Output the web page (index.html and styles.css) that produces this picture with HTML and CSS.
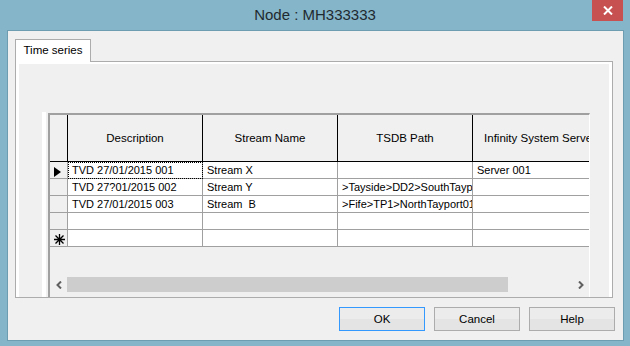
FILE: index.html
```html
<!DOCTYPE html>
<html lang="en">
<head>
  <meta charset="UTF-8" />
  <title>Node : MH333333</title>
  <link rel="stylesheet" href="styles.css">
</head>
<body>
  <div class="window">
    <div class="titlebar">
      <span></span>
      <span class="title">Node : MH333333</span>
      <span class="close-wrap">
        <button class="close" type="button">
          <svg width="10" height="9" viewBox="0 0 10 9">
            <path d="M1 0.5 L9 8.5 M9 0.5 L1 8.5" stroke="#fff" stroke-width="2" fill="none"/>
          </svg>
        </button>
      </span>
    </div>

    <div class="client">
      <div class="tabs">
        <div class="tab">Time series</div>
        <div class="tab-fill"></div>
      </div>

      <div class="panel">
        <div class="page">
          <div class="grid-host">
            <div class="grid">
              <table class="data">
                <thead>
                  <tr>
                    <th class="rowhead"></th>
                    <th>Description</th>
                    <th>Stream Name</th>
                    <th>TSDB Path</th>
                    <th>Infinity System Server</th>
                  </tr>
                </thead>
                <tbody>
                  <tr>
                    <td class="rowhead">
                      <svg width="7" height="10" viewBox="0 0 7 10"><polygon points="0,0 7,5 0,10" fill="#000"/></svg>
                    </td>
                    <td class="focus">TVD 27/01/2015 001</td>
                    <td>Stream X</td>
                    <td></td>
                    <td>Server 001</td>
                  </tr>
                  <tr>
                    <td class="rowhead"></td>
                    <td>TVD 27?01/2015 002</td>
                    <td>Stream Y</td>
                    <td>&gt;Tayside&gt;DD2&gt;SouthTayport</td>
                    <td></td>
                  </tr>
                  <tr>
                    <td class="rowhead"></td>
                    <td>TVD 27/01/2015 003</td>
                    <td>Stream&nbsp; B</td>
                    <td>&gt;Fife&gt;TP1&gt;NorthTayport01</td>
                    <td></td>
                  </tr>
                  <tr>
                    <td class="rowhead"></td>
                    <td></td><td></td><td></td><td></td>
                  </tr>
                  <tr>
                    <td class="rowhead">
                      <svg width="11" height="11" viewBox="0 0 11 11">
                        <path d="M5.5 0 V11 M0 5.5 H11 M1.5 1.5 L9.5 9.5 M9.5 1.5 L1.5 9.5" stroke="#000" stroke-width="1.3" fill="none"/>
                      </svg>
                    </td>
                    <td></td><td></td><td></td><td></td>
                  </tr>
                </tbody>
              </table>
              <div class="grid-space"></div>
              <div class="hscroll">
                <div class="arrow">
                  <svg width="6" height="8" viewBox="0 0 6 8"><polyline points="5,0.5 1.5,4 5,7.5" stroke="#606060" stroke-width="2" fill="none"/></svg>
                </div>
                <div class="track"><div class="thumb"></div></div>
                <div class="arrow">
                  <svg width="6" height="8" viewBox="0 0 6 8"><polyline points="1,0.5 4.5,4 1,7.5" stroke="#606060" stroke-width="2" fill="none"/></svg>
                </div>
              </div>
            </div>
          </div>
        </div>
      </div>

      <div class="buttons">
        <button class="btn default" type="button">OK</button>
        <button class="btn" type="button">Cancel</button>
        <button class="btn" type="button">Help</button>
      </div>
    </div>
  </div>
</body>
</html>
```

FILE: styles.css
```css
* {
  box-sizing: border-box;
}

body {
  margin: 0;
  font-family: "Liberation Sans", Arial, sans-serif;
  background-color: #85b5c8;
}

.window {
  width: 630px;
  height: 346px;
  background-color: #85b5c8;
  overflow: hidden;
}

.titlebar {
  display: grid;
  grid-template-columns: 1fr auto 1fr;
  height: 30px;
}

.title {
  font-size: 15px;
  line-height: 30px;
  color: #1f2a30;
}

.close-wrap {
  display: flex;
  justify-content: flex-end;
  align-items: flex-start;
  padding-right: 7px;
}

.close {
  width: 31px;
  height: 21px;
  border: none;
  padding: 0;
  background-color: #c75050;
  display: flex;
  align-items: center;
  justify-content: center;
}

.client {
  margin: 0 7px;
  width: 617px;
  height: 311px;
  border: 1px solid #6c9db1;
  background-color: #f0f0f0;
  padding: 8px 8px 0 7px;
}

.tabs {
  display: flex;
  width: 598px;
  height: 23px;
}

.tab {
  width: 76px;
  border: 1px solid #acacac;
  border-bottom: none;
  background-color: #fff;
  font-size: 11.5px;
  line-height: 21px;
  text-align: center;
  color: #000;
}

.tab-fill {
  flex: 1;
  border-bottom: 1px solid #acacac;
}

.panel {
  width: 598px;
  height: 236px;
  border: 1px solid #acacac;
  border-top: none;
  background-color: #fff;
  padding: 2px 3px 0 3px;
}

.page {
  height: 100%;
  background-color: #f0f0f0;
  padding: 48px 0 0 23px;
  overflow: hidden;
}

.grid-host {
  height: 185px;
  border-left: 4px solid #fff;
  padding: 1px 0 0 2px;
}

.grid {
  width: 542px;
  height: 184px;
  border-top: 2px solid #a0a0a0;
  border-left: 2px solid #a0a0a0;
  border-right: 1px solid #fff;
  background-color: #f0f0f0;
  display: flex;
  flex-direction: column;
  overflow: hidden;
}

.data {
  border-collapse: separate;
  border-spacing: 0;
  table-layout: fixed;
  width: 558px;
  font-size: 11px;
  color: #000;
}

.data th,
.data td {
  width: 135px;
  padding: 0 0 0 4px;
  white-space: nowrap;
  overflow: hidden;
  text-align: left;
}

.data th {
  height: 47px;
  font-weight: normal;
  font-size: 11.5px;
  text-align: center;
  padding: 0;
  background-color: #f0f0f0;
  border-right: 1px solid #000;
  border-bottom: 1px solid #000;
}

.data td {
  height: 17px;
  line-height: 16px;
  background-color: #fff;
  border-right: 1px solid #a0a0a0;
  border-bottom: 1px solid #a0a0a0;
}

.data .rowhead {
  width: 18px;
  padding: 0;
  background-color: #f0f0f0;
  text-align: center;
}

.data td.rowhead svg {
  display: block;
  margin: 3px auto 0 4px;
}

.data td.focus {
  outline: 1px dotted #000;
  outline-offset: -1px;
}

.grid-space {
  flex: 1;
}

.hscroll {
  display: flex;
  height: 17px;
  margin-bottom: 4px;
  background-color: #f0f0f0;
}

.arrow {
  width: 17px;
  display: flex;
  align-items: center;
  justify-content: center;
}

.track {
  flex: 1;
  padding: 1px 0;
}

.thumb {
  width: 441px;
  height: 100%;
  background-color: #cdcdcd;
}

.buttons {
  display: flex;
  justify-content: flex-end;
  gap: 9px;
  margin-top: 9px;
}

.btn {
  width: 86px;
  height: 24px;
  border: 1px solid #acacac;
  background: linear-gradient(#ececec 50%, #e4e4e4 50%);
  font-family: "Liberation Sans", Arial, sans-serif;
  font-size: 11.5px;
  color: #000;
  padding: 0;
}

.btn.default {
  border-color: #3399ff;
}
```
